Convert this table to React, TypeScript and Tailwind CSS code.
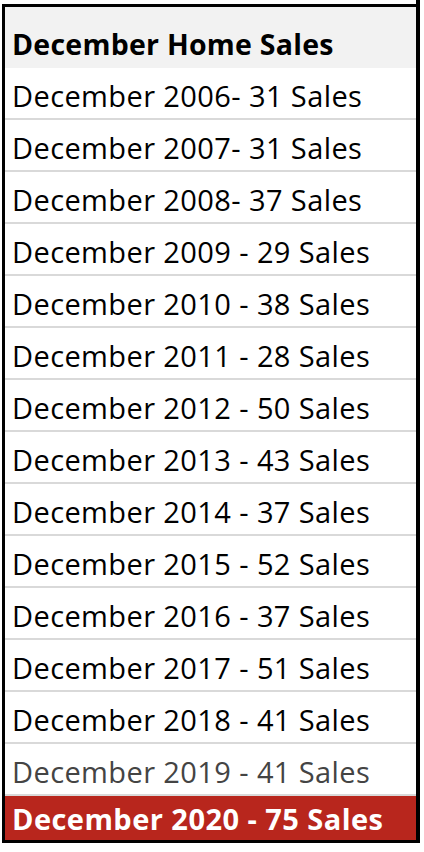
import React from "react";

const rows: { label: string; tone?: "gray" }[] = [
  { label: "December 2006- 31 Sales" },
  { label: "December 2007- 31 Sales" },
  { label: "December 2008- 37 Sales" },
  { label: "December 2009 - 29 Sales" },
  { label: "December 2010 - 38 Sales" },
  { label: "December 2011 - 28 Sales" },
  { label: "December 2012 - 50 Sales" },
  { label: "December 2013 - 43 Sales" },
  { label: "December 2014 - 37 Sales" },
  { label: "December 2015 - 52 Sales" },
  { label: "December 2016 - 37 Sales" },
  { label: "December 2017 - 51 Sales" },
  { label: "December 2018 - 41 Sales" },
  { label: "December 2019 - 41 Sales", tone: "gray" },
];

export default function App() {
  return (
    <div
      className="relative w-[424px] h-[852px] bg-white overflow-hidden"
      style={{ fontFamily: "'Open Sans', Lato, sans-serif" }}
    >
      <div className="pl-[2px] pt-[4px]">
        <div className="w-[418px] h-[839px] border-[3px] border-r-4 border-black flex flex-col">
          <div className="h-[61px] bg-[#f2f2f2] flex items-end pl-[7px] pb-[10px]">
            <span className="text-[28.5px] leading-none font-bold text-black tracking-[0.25px]">
              December Home Sales
            </span>
          </div>
          {rows.map((r) => (
            <div
              key={r.label}
              className="h-[52px] shrink-0 border-b-2 border-[#d9d9d9] flex items-end pl-[7px] pb-[8px]"
            >
              <span
                className={
                  "text-[29px] leading-none tracking-[0.4px] " +
                  (r.tone === "gray" ? "text-[#444444]" : "text-black")
                }
              >
                {r.label}
              </span>
            </div>
          ))}
          <div className="flex-1 bg-[#b8261d] flex items-end pl-[7px] pb-[7px]">
            <span className="text-[29px] leading-none font-bold text-white tracking-[0.45px]">
              December 2020 - 75 Sales
            </span>
          </div>
        </div>
      </div>
      <div className="absolute right-[4px] top-0 w-[4px] h-[4px] bg-black" />
    </div>
  );
}
